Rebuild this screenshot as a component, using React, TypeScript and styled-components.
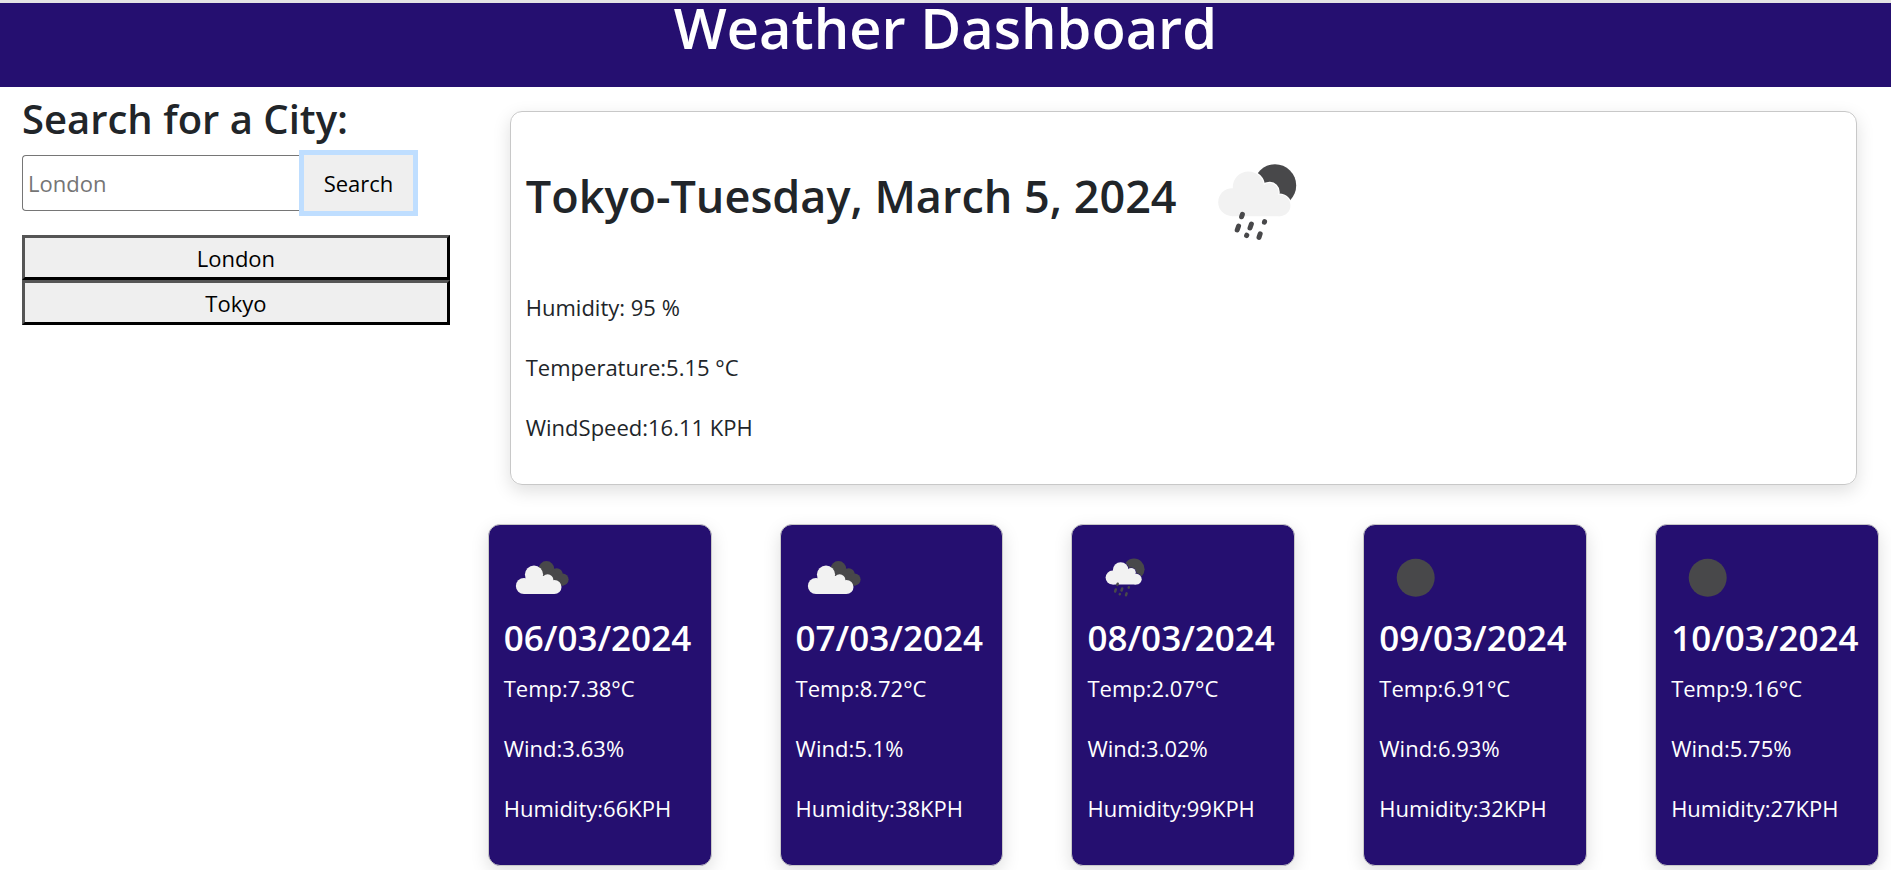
import React, { useId, useState } from "react";
import styled, { createGlobalStyle } from "styled-components";

const GlobalStyle = createGlobalStyle`
  *, *::before, *::after { box-sizing: border-box; }
  body {
    margin: 0;
    background: #fff;
    color: #212529;
    font-family: "Segoe UI", "Open Sans", "Noto Sans", sans-serif;
    font-size: 22px;
    line-height: 36px;
  }
  h1, h2, h3, p { margin: 0; font-weight: 600; }
  p { font-weight: 400; }
  button, input { font: inherit; }
`;

const Header = styled.header`
  height: 87px;
  border-top: 3px solid #e4e4e4;
  background: #250f70;
  color: #fff;
  text-align: center;
`;

const Title = styled.h1`
  font-size: 56px;
  line-height: 48px;
`;

const Layout = styled.div`
  display: grid;
  grid-template-columns: minmax(0, 1fr) minmax(0, 3fr);
`;

const Sidebar = styled.aside`
  padding: 8px 23px 8px 22px;
`;

const SearchTitle = styled.h2`
  font-size: 40px;
  line-height: 48px;
`;

const SearchForm = styled.form`
  display: flex;
  height: 56px;
  margin: 12px 0 24px;
`;

const CityInput = styled.input`
  width: 282px;
  padding: 2px 5px;
  border: 1px solid #767676;
  border-right: 0;
  border-radius: 4px 0 0 4px;
  &::placeholder { color: #757575; opacity: 1; }
`;

const SearchButton = styled.button`
  width: 109px;
  padding: 0;
  border: 0;
  background: #efefef;
  color: #000;
  box-shadow: 0 0 0 5px #bfdeff;
`;

const History = styled.div`
  display: flex;
  flex-direction: column;
`;

const HistoryButton = styled.button`
  height: 45px;
  padding: 0;
  border: 3px solid;
  border-color: #555 #000 #000 #555;
  background: #efefef;
  color: #000;
`;

const Main = styled.main`
  padding: 24px 12px 4px 15px;
`;

const Card = styled.section`
  padding: 15px;
  border: 1px solid #c8c8c8;
  border-radius: 12px;
  box-shadow: 0 6px 18px rgba(0, 0, 0, 0.13);
`;

const CurrentCard = styled(Card)`
  margin: 0 22px 39px;
`;

const CurrentHeading = styled.div`
  display: flex;
  align-items: flex-start;
  gap: 4px;
  margin-bottom: 12px;
`;

const CurrentTitle = styled.h2`
  margin-top: 40px;
  font-size: 45px;
  line-height: 58px;
`;

const Reading = styled.p`
  margin-bottom: 24px;
`;

const Forecast = styled.div`
  display: grid;
  grid-template-columns: repeat(5, minmax(0, 1fr));
  gap: 68px;
`;

const ForecastCard = styled(Card)`
  background: #250f70;
  color: #fff;
  white-space: nowrap;
`;

const ForecastDate = styled.h3`
  margin-bottom: 9px;
  font-size: 35px;
  line-height: 46px;
`;

const Icon = styled.svg<{ $size: number }>`
  display: block;
  flex-shrink: 0;
  width: ${(p) => p.$size}px;
  height: ${(p) => p.$size}px;
`;

type Sky = "clouds" | "rain" | "clear";

const DARK = "#48484a";
const LIGHT = "#f2f2f2";

const RainCloud = () => (
  <>
    <circle cx="25.6" cy="37.6" r="7" />
    <circle cx="33.7" cy="30" r="7.8" />
    <circle cx="44.2" cy="32.6" r="4.6" />
    <circle cx="49.3" cy="39.2" r="5.4" />
    <path d="M25.6 44.6 V34 H46 L49.3 44.6 z" />
  </>
);

const FrontCloud = () => (
  <>
    <circle cx="20" cy="46" r="8.1" />
    <circle cx="30" cy="34.6" r="9.1" />
    <circle cx="43.6" cy="40" r="5.8" />
    <circle cx="50.4" cy="47" r="7.1" />
    <path d="M20 54.1 L22 36 H44 L50.4 54.1 z" />
  </>
);

function WeatherIcon({ sky, size }: { sky: Sky; size: number }) {
  const mask = useId();
  return (
    <Icon $size={size} viewBox="0 0 75 75" role="img" aria-label={sky}>
      {sky === "clear" && <circle cx="36.7" cy="37.7" r="19" fill={DARK} />}
      {sky === "rain" && (
        <>
          <mask id={mask} maskUnits="userSpaceOnUse" x="0" y="0" width="75" height="75">
            <rect width="75" height="75" fill="#fff" />
            <g fill="#000" stroke="#000" strokeWidth="1.2"><RainCloud /></g>
          </mask>
          <circle cx="47" cy="29.2" r="10.6" fill={DARK} mask={`url(#${mask})`} />
          <g fill={LIGHT}><RainCloud /></g>
          <path
            d="M30.7 43.7 l-.4 1.2 M28.8 49.5 l-.7 2 M35.2 48.5 l-.7 2 M41.8 47.3 l-.1 .3 M32.9 54.1 l-.1 .2 M39.6 53.4 l-.6 1.8"
            fill="none"
            stroke={DARK}
            strokeWidth="2.5"
            strokeLinecap="round"
          />
        </>
      )}
      {sky === "clouds" && (
        <>
          <g fill={DARK}>
            <circle cx="42.4" cy="29" r="7.9" />
            <circle cx="52.6" cy="34.4" r="6.2" />
            <circle cx="58.6" cy="39.6" r="6" />
            <path d="M42 34 L50 30 L60 45.6 H50 z" />
          </g>
          <g fill={LIGHT}><FrontCloud /></g>
        </>
      )}
    </Icon>
  );
}

const days: { date: string; sky: Sky; temp: string; wind: string; humidity: string }[] = [
  { date: "06/03/2024", sky: "clouds", temp: "7.38", wind: "3.63", humidity: "66" },
  { date: "07/03/2024", sky: "clouds", temp: "8.72", wind: "5.1", humidity: "38" },
  { date: "08/03/2024", sky: "rain", temp: "2.07", wind: "3.02", humidity: "99" },
  { date: "09/03/2024", sky: "clear", temp: "6.91", wind: "6.93", humidity: "32" },
  { date: "10/03/2024", sky: "clear", temp: "9.16", wind: "5.75", humidity: "27" },
];

export default function App() {
  const [city, setCity] = useState("");
  return (
    <>
      <GlobalStyle />
      <Header>
        <Title>Weather Dashboard</Title>
      </Header>
      <Layout>
        <Sidebar>
          <SearchTitle><label htmlFor="city">Search for a City:</label></SearchTitle>
          <SearchForm onSubmit={(e) => e.preventDefault()}>
            <CityInput id="city" placeholder="London" value={city} onChange={(e) => setCity(e.target.value)} />
            <SearchButton type="submit">Search</SearchButton>
          </SearchForm>
          <History>
            {["London", "Tokyo"].map((name) => (
              <HistoryButton key={name} type="button" onClick={() => setCity(name)}>{name}</HistoryButton>
            ))}
          </History>
        </Sidebar>
        <Main>
          <CurrentCard>
            <CurrentHeading>
              <CurrentTitle>Tokyo-Tuesday, March 5, 2024</CurrentTitle>
              <WeatherIcon sky="rain" size={150} />
            </CurrentHeading>
            <Reading>Humidity: 95 %</Reading>
            <Reading>Temperature:5.15 °C</Reading>
            <Reading>WindSpeed:16.11 KPH</Reading>
          </CurrentCard>
          <Forecast>
            {days.map((day) => (
              <ForecastCard as="article" key={day.date}>
                <WeatherIcon sky={day.sky} size={75} />
                <ForecastDate>{day.date}</ForecastDate>
                <Reading>Temp:{day.temp}°C</Reading>
                <Reading>Wind:{day.wind}%</Reading>
                <Reading>Humidity:{day.humidity}KPH</Reading>
              </ForecastCard>
            ))}
          </Forecast>
        </Main>
      </Layout>
    </>
  );
}
